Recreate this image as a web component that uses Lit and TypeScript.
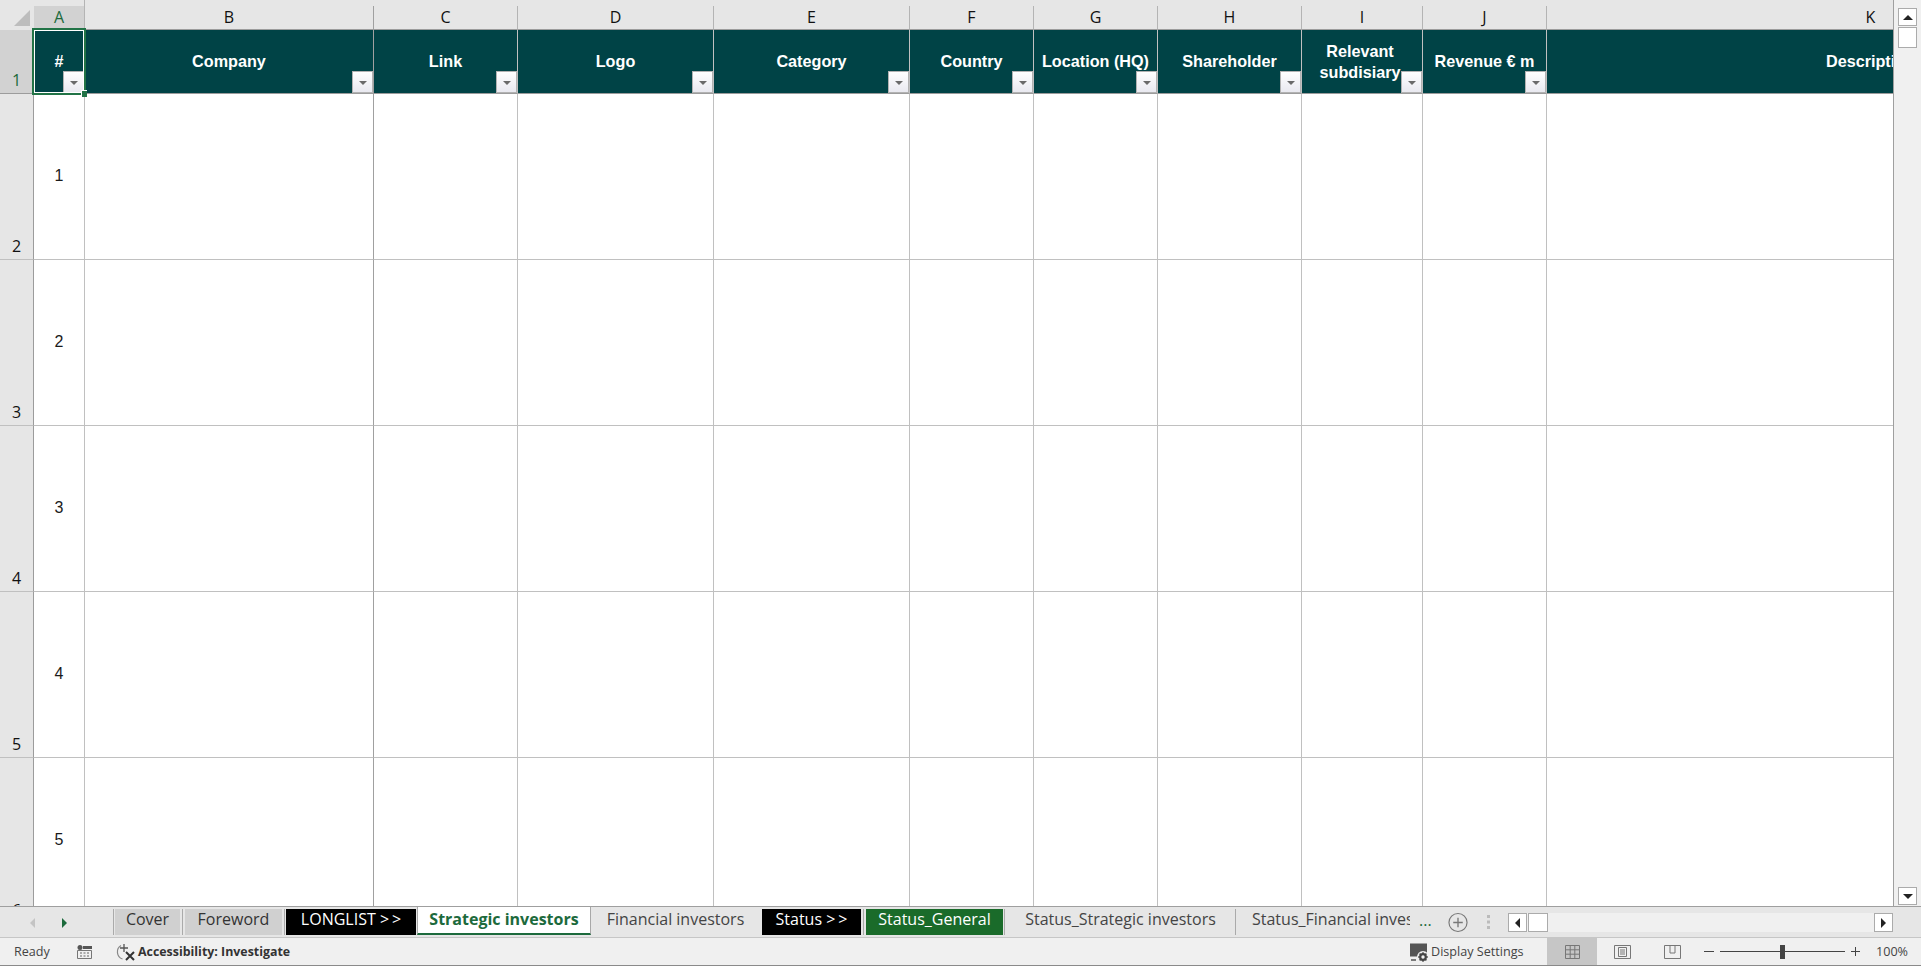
import { LitElement, html, css, svg } from "lit";
import { customElement } from "lit/decorators.js";

const COLS = [
  ["A", "#"],
  ["B", "Company"],
  ["C", "Link"],
  ["D", "Logo"],
  ["E", "Category"],
  ["F", "Country"],
  ["G", "Location (HQ)"],
  ["H", "Shareholder"],
  ["I", "Relevant subdisiary"],
  ["J", "Revenue € m"],
  ["K", "Description"],
];

const TABS: [string, string][] = [
  ["sep", ""],
  ["plain", "Cover"],
  ["sep", ""],
  ["plain", "Foreword"],
  ["sep", ""],
  ["black", "LONGLIST >>"],
  ["gap", ""],
  ["active", "Strategic investors"],
  ["open", "Financial investors"],
  ["gap", ""],
  ["black", "Status >>"],
  ["sep", ""],
  ["green", "Status_General"],
  ["sep", ""],
  ["open", "Status_Strategic investors"],
  ["sep", ""],
  ["cut", "Status_Financial investors"],
];

@customElement("app-root")
export class AppRoot extends LitElement {
  static styles = css`
    :host {
      display: flex;
      flex-direction: column;
      width: 1921px;
      height: 966px;
      overflow: hidden;
      background: #e6e6e6;
      font-family: "Open Sans", "Noto Sans", sans-serif;
      color: #333;
    }
    .sheet {
      display: flex;
      height: 906px;
      flex: none;
    }
    .grid {
      flex: none;
      width: 1894px;
      height: 906px;
      overflow: hidden;
      display: grid;
      grid-template-columns: 34px 51px 289px 144px 196px 196px 124px 124px 144px 121px 124px 648px;
      grid-template-rows: 30px 64px repeat(5, 166px);
      background: #fff;
      box-sizing: border-box;
      border-right: 1px solid #9f9f9f;
    }
    .corner {
      background: #e6e6e6;
      display: flex;
      padding: 10px 0 0 14px;
      box-sizing: border-box;
    }
    .corner svg { display: block; }
    .colhead {
      background: #e6e6e6;
      padding-top: 6px;
      box-sizing: border-box;
      display: flex;
    }
    .colhead span {
      flex: 1;
      display: flex;
      align-items: center;
      justify-content: center;
      border-right: 1px solid #b4b4b4;
      border-bottom: 1px solid #9c9c9c;
      font-size: 16px;
      line-height: 20px;
      padding-bottom: 2px;
      box-sizing: border-box;
      color: #111;
    }
    .colhead.sel { padding-top: 0; }
    .colhead.sel span {
      color: #1c6a3c;
      padding-top: 6px;
      padding-bottom: 2px;
      background: linear-gradient(#e6e6e6 6px, #d2d2d2 6px);
    }
    .rowhead {
      background: #e6e6e6;
      border-right: 1px solid #9c9c9c;
      border-bottom: 1px solid #c0c0c0;
      display: flex;
      align-items: flex-end;
      justify-content: center;
      font-size: 16px;
      color: #111;
      line-height: 26px;
    }
    .rowhead.sel {
      background: #d2d2d2;
      color: #1c6a3c;
      border-bottom-color: #9c9c9c;
    }
    .h {
      position: relative;
      background: #004346;
      color: #fff;
      font: bold 16.2px/21px "Liberation Sans", Arial, sans-serif;
      border-right: 1px solid #c0c0c0;
      border-bottom: 1px solid #9c9c9c;
      display: flex;
      align-items: center;
      justify-content: center;
      text-align: center;
      white-space: nowrap;
    }
    .h.wrap { white-space: normal; padding-right: 4px; }
    .filter {
      position: absolute;
      right: 0;
      bottom: 0;
      width: 21px;
      height: 22px;
      box-sizing: border-box;
      border: 1.5px solid #b2b2b2;
      background: linear-gradient(#ffffff, #e9e9f0);
      display: flex;
      align-items: center;
      justify-content: center;
    }
    .filter i {
      display: block;
      width: 0;
      height: 0;
      border-left: 4px solid transparent;
      border-right: 4px solid transparent;
      border-top: 4.5px solid #6a6a6a;
      margin-top: 2px;
    }
    .sel-box {
      position: absolute;
      left: -2px;
      top: -2px;
      width: 54px;
      height: 67px;
      box-sizing: border-box;
      border: 2px solid #217346;
      outline: 1px solid #fff;
      outline-offset: -3px;
      z-index: 2;
      pointer-events: none;
    }
    .handle {
      position: absolute;
      right: -3px;
      bottom: -4px;
      width: 5px;
      height: 6px;
      background: #217346;
      border-left: 1px solid #fff;
      border-top: 1px solid #fff;
      z-index: 3;
    }
    .c {
      background: #fff;
      border-right: 1px solid #c0c0c0;
      border-bottom: 1px solid #c0c0c0;
      display: flex;
      align-items: center;
      justify-content: center;
      font: 16px "Liberation Sans", Arial, sans-serif;
      color: #1a1a1a;
      padding-bottom: 1px;
      box-sizing: border-box;
    }
    .c.dark { border-right-color: #a0a0a0; }
    .h.dark { border-right-color: #a0a0a0; }
    .colhead.dark span { border-right-color: #a0a0a0; }

    .vscroll {
      flex: 1;
      display: flex;
      flex-direction: column;
      justify-content: space-between;
      background: #f0f0f0;
      padding: 8px 4px 1px 4px;
      box-sizing: border-box;
    }
    .vtop { display: flex; flex-direction: column; gap: 1px; }
    .vbtn {
      width: 19px;
      height: 18px;
      background: #fff;
      border: 1px solid #ababab;
      box-sizing: border-box;
      display: flex;
      align-items: center;
      justify-content: center;
    }
    .vbtn.thumb { height: 21px; }
    .tri-up, .tri-down { width: 0; height: 0; border-left: 5px solid transparent; border-right: 5px solid transparent; }
    .tri-up { border-bottom: 5px solid #222; }
    .tri-down { border-top: 5px solid #222; }

    .tabbar {
      flex: none;
      height: 32px;
      box-sizing: border-box;
      border-top: 1px solid #9f9f9f;
      border-bottom: 1px solid #c6c6c6;
      display: flex;
      background: #e6e6e6;
    }
    .nav {
      flex: none;
      width: 112px;
      display: flex;
      align-items: center;
      padding: 2px 0 0 30px;
      box-sizing: border-box;
      gap: 27px;
    }
    .tl { width: 0; height: 0; border-top: 5px solid transparent; border-bottom: 5px solid transparent; border-right: 5px solid #c4c4c4; }
    .tr { width: 0; height: 0; border-top: 5px solid transparent; border-bottom: 5px solid transparent; border-left: 5px solid #1c6a3c; }
    .tabs {
      flex: none;
      width: 1298px;
      display: grid;
      grid-template-columns: 3px 65px 5px 97px 4px 130px 1px 174px 169px 2px 99px 5px 137px 3px 229px 1px 174px;
      grid-template-rows: 26px;
      padding-top: 2px;
      box-sizing: border-box;
      height: 28px;
    }
    .t {
      display: flex;
      align-items: center;
      justify-content: center;
      font-size: 16px;
      color: #444;
      white-space: nowrap;
      overflow: hidden;
      padding-bottom: 7px;
      box-sizing: border-box;
    }
    .t span { white-space: pre; }
    .t.plain { background: #d0d0d0; color: #333; }
    .t.black { background: #000; color: #fff; }
    .t.green { background: #1a6b2a; color: #fff; }
    .t.active {
      margin-top: -2px;
      height: 28px;
      background: #fff;
      color: #1c6a3c;
      font-weight: 700;
      border-left: 1px solid #a8a8a8;
      border-right: 1px solid #a8a8a8;
      border-bottom: 2px solid #1c6a3c;
      padding-bottom: 3px;
    }
    .t.cut { justify-content: flex-start; padding-left: 16px; }
    .gt { letter-spacing: 3px; margin-right: -3px; }
    .sep { display: flex; justify-content: center; }
    .sep i { display: block; width: 1px; height: 26px; background: #aaa; }
    .more {
      flex: none;
      width: 38px;
      padding: 0 0 5px 9px;
      box-sizing: border-box;
      display: flex;
      align-items: center;
      color: #1c6a3c;
      font-size: 16px;
    }
    .add { flex: none; width: 20px; display: flex; align-items: center; }
    .dots { flex: none; width: 40px; display: flex; align-items: center; justify-content: center; }
    .hscroll {
      flex: none;
      width: 385px;
      height: 19px;
      margin-top: 6px;
      background: #f0f0f0;
      display: flex;
      justify-content: space-between;
    }
    .hl { display: flex; gap: 1px; }
    .hbtn {
      width: 19px;
      height: 19px;
      background: #fff;
      border: 1px solid #ababab;
      box-sizing: border-box;
      display: flex;
      align-items: center;
      justify-content: center;
    }
    .hbtn.thumb { width: 20px; }
    .tri-l, .tri-r { width: 0; height: 0; border-top: 5px solid transparent; border-bottom: 5px solid transparent; }
    .tri-l { border-right: 5px solid #222; }
    .tri-r { border-left: 5px solid #222; }

    .status {
      flex: 1;
      display: flex;
      align-items: center;
      background: #f0f0f0;
      border-bottom: 1px solid #8a8a8a;
      box-sizing: border-box;
      font-size: 12.6px;
      color: #444;
      height: 28px;
    }
    .ready { flex: none; width: 77px; padding-left: 14px; box-sizing: border-box; }
    .cal { flex: none; width: 39px; display: flex; }
    .acc { flex: none; width: 22px; display: flex; }
    .acctext { flex: none; width: 1271px; font-weight: 700; color: #333; font-size: 12.4px; }
    .disp { flex: none; width: 22px; display: flex; }
    .disptext { flex: none; width: 116px; }
    .views { flex: none; display: flex; align-self: stretch; }
    .v { flex: none; width: 50px; display: flex; align-items: center; justify-content: center; }
    .v.on { background: #c6c6c6; }
    .zoomwrap { flex: none; margin-left: 7px; display: flex; align-items: center; }
    .zm { width: 10px; height: 1px; background: #444; }
    .track { width: 125px; height: 1px; background: #444; margin: 0 6px; display: flex; align-items: center; padding-left: 60px; box-sizing: border-box; }
    .track i { display: block; width: 5px; height: 14px; background: #444; flex: none; }
    .pct { margin-left: 16px; }
  `;

  private filter() {
    return html`<div class="filter"><i></i></div>`;
  }

  private ic(w: number, h: number, body: unknown) {
    return html`<svg width=${w} height=${h} viewBox="0 0 ${w} ${h}" fill="none">${body}</svg>`;
  }

  private label(t: string) {
    return t.endsWith(">>")
      ? html`<span>${t.slice(0, -2)}<span class="gt">&gt;&gt;</span></span>`
      : html`<span>${t}</span>`;
  }

  render() {
    const rows = [2, 3, 4, 5, 6];
    return html`
      <div class="sheet">
        <div class="grid">
          <div class="corner">
            ${this.ic(16, 16, svg`<path d="M16 0V16H0Z" fill="#bdbdbd"/>`)}
          </div>
          ${COLS.map(
            ([l], i) => html`<div class="colhead ${i === 0 ? "sel" : ""} ${l === "B" ? "dark" : ""}"><span>${l}</span></div>`
          )}
          <div class="rowhead sel">1</div>
          ${COLS.map(([l, t], i) => {
            if (i === 0) {
              return html`<div class="h"><div>${t}</div>${this.filter()}<div class="sel-box"></div><div class="handle"></div></div>`;
            }
            return html`<div class="h ${l === "I" ? "wrap" : ""} ${l === "B" ? "dark" : ""}">
              <div>${t}</div>${l !== "K" ? this.filter() : ""}
            </div>`;
          })}
          ${rows.map(
            (r, ri) => html`
              <div class="rowhead">${r}</div>
              ${COLS.map(
                ([l], i) => html`<div class="c ${l === "B" ? "dark" : ""}">${i === 0 ? ri + 1 : ""}</div>`
              )}
            `
          )}
        </div>
        <div class="vscroll">
          <div class="vtop">
            <div class="vbtn"><div class="tri-up"></div></div>
            <div class="vbtn thumb"></div>
          </div>
          <div class="vbtn"><div class="tri-down"></div></div>
        </div>
      </div>

      <div class="tabbar">
        <div class="nav"><div class="tl"></div><div class="tr"></div></div>
        <div class="tabs">
          ${TABS.map(([k, t]) =>
            k === "sep"
              ? html`<div class="sep"><i></i></div>`
              : k === "gap"
              ? html`<div></div>`
              : html`<div class="t ${k}">${this.label(t)}</div>`
          )}
        </div>
        <div class="more">...</div>
        <div class="add">
          ${this.ic(21, 21, svg`<circle cx="10.5" cy="10.5" r="9.5" stroke="#777" stroke-width="1.2"/><path d="M5.5 10.5h10M10.5 5.5v10" stroke="#777" stroke-width="1.4"/>`)}
        </div>
        <div class="dots">
          ${this.ic(3, 14, svg`<rect y="0" width="3" height="3" fill="#bbb"/><rect y="5.5" width="3" height="3" fill="#bbb"/><rect y="11" width="3" height="3" fill="#bbb"/>`)}
        </div>
        <div class="hscroll">
          <div class="hl">
            <div class="hbtn"><div class="tri-l"></div></div>
            <div class="hbtn thumb"></div>
          </div>
          <div class="hbtn"><div class="tri-r"></div></div>
        </div>
      </div>

      <div class="status">
        <div class="ready">Ready</div>
        <div class="cal">
          ${this.ic(15, 14, svg`<circle cx="3" cy="2.5" r="2.5" fill="#555"/><rect x="6" y="1" width="9" height="3" fill="#555"/><path d="M.5 5.5h14v8H.5z" stroke="#777"/><path d="M3 8h2M6.5 8h2M10 8h2M3 11h2M6.5 11h2M10 11h2" stroke="#666"/>`)}
        </div>
        <div class="acc">
          ${this.ic(20, 18, svg`<path d="M5 2.5a7.5 7.5 0 0 0 1.5 13.5" stroke="#888" stroke-width="1.2"/><path d="M8 1v8M4 5h8" stroke="#555" stroke-width="1.3"/><path d="M10 9l8 8M18 9l-8 8" stroke="#333" stroke-width="2"/>`)}
        </div>
        <div class="acctext">Accessibility: Investigate</div>
        <div class="disp">
          ${this.ic(20, 20, svg`<path d="M1 1.5h17v13H1z" fill="#555"/><path d="M2 18h5" stroke="#555" stroke-width="1.5"/><circle cx="14" cy="15" r="6" fill="#f0f0f0"/><circle cx="14" cy="15" r="2.8" fill="#f0f0f0" stroke="#444" stroke-width="2.2"/><path d="M14 10.2v1.6M14 18.2v1.6M9.2 15h1.6M17.2 15h1.6M10.6 11.6l1.1 1.1M16.3 17.3l1.1 1.1M10.6 18.4l1.1-1.1M16.3 12.7l1.1-1.1" stroke="#444" stroke-width="1.5"/>`)}
        </div>
        <div class="disptext">Display Settings</div>
        <div class="views">
          <div class="v on">
            ${this.ic(15, 14, svg`<path d="M.5.5h14v13H.5zM5.2.5v13M9.8.5v13M.5 4.8h14M.5 9.2h14" stroke="#777"/>`)}
          </div>
          <div class="v">
            ${this.ic(17, 14, svg`<path d="M.5.5h16v13H.5z" stroke="#777"/><path d="M4.5 2.5h8v9h-8zM6 5h5M6 7h5M6 9h5" stroke="#777"/>`)}
          </div>
          <div class="v">
            ${this.ic(17, 14, svg`<path d="M.5.5h16v13H.5zM6 .5v7.5h5V.5" stroke="#777"/>`)}
          </div>
        </div>
        <div class="zoomwrap">
          <div class="zm"></div>
          <div class="track"><i></i></div>
          ${this.ic(9, 9, svg`<path d="M0 4.5h9M4.5 0v9" stroke="#444"/>`)}
          <div class="pct">100%</div>
        </div>
      </div>
    `;
  }
}
